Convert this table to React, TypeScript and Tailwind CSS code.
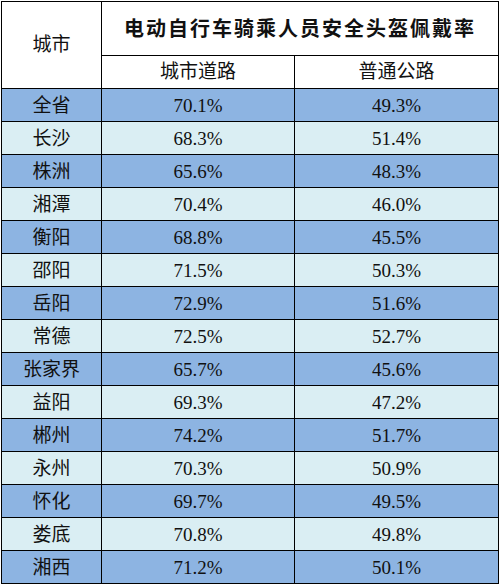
const rows = [
  ["全省", "70.1%", "49.3%"],
  ["长沙", "68.3%", "51.4%"],
  ["株洲", "65.6%", "48.3%"],
  ["湘潭", "70.4%", "46.0%"],
  ["衡阳", "68.8%", "45.5%"],
  ["邵阳", "71.5%", "50.3%"],
  ["岳阳", "72.9%", "51.6%"],
  ["常德", "72.5%", "52.7%"],
  ["张家界", "65.7%", "45.6%"],
  ["益阳", "69.3%", "47.2%"],
  ["郴州", "74.2%", "51.7%"],
  ["永州", "70.3%", "50.9%"],
  ["怀化", "69.7%", "49.5%"],
  ["娄底", "70.8%", "49.8%"],
  ["湘西", "71.2%", "50.1%"],
];

export default function App() {
  return (
    <div className="w-[501px] h-[585px] bg-white pl-px pt-px font-['Liberation_Serif','Noto_Sans_CJK_SC',serif] text-[19px] text-[#111]">
      <table className="border-collapse table-fixed w-[497px]">
        <colgroup>
          <col className="w-[100px]" />
          <col className="w-[193px]" />
          <col className="w-[204px]" />
        </colgroup>
        <thead>
          <tr className="h-[54px]">
            <th rowSpan={2} className="border-[1.5px] border-black font-normal text-center">
              城市
            </th>
            <th colSpan={2} className="border-[1.5px] border-black font-bold text-[20px] tracking-[2px] text-center">
              电动自行车骑乘人员安全头盔佩戴率
            </th>
          </tr>
          <tr className="h-[33px]">
            <th className="border-[1.5px] border-black font-normal text-center">城市道路</th>
            <th className="border-[1.5px] border-black font-normal text-center">普通公路</th>
          </tr>
        </thead>
        <tbody>
          {rows.map((r, i) => (
            <tr key={r[0]} className={i % 2 === 0 ? "h-[33px] bg-[#8db4e2]" : "h-[33px] bg-[#daeef3]"}>
              {r.map((c) => (
                <td key={c} className="border-[1.5px] border-black text-center leading-none p-0">
                  {c}
                </td>
              ))}
            </tr>
          ))}
        </tbody>
      </table>
    </div>
  );
}
